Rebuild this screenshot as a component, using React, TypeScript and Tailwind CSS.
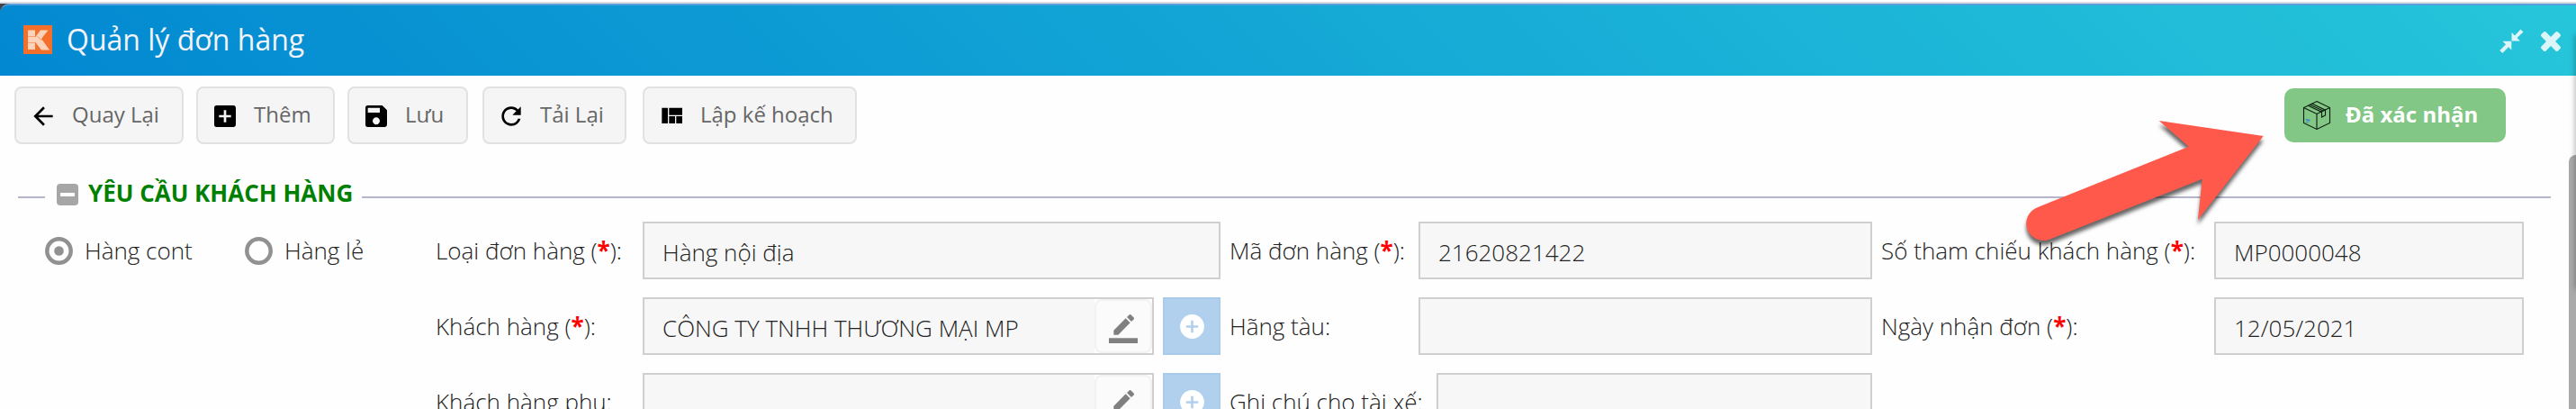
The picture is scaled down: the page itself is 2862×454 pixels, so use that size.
import type { ReactNode } from "react";
import { MdAddBox, MdArrowBack, MdRefresh, MdSave } from "react-icons/md";

function QuiltIcon() {
  return (
    <svg viewBox="0 0 24 24" className="size-8" fill="currentColor">
      <path d="M10 18h5v-6h-5v6zm-6 0h5V5H4v13zm12 0h5v-6h-5v6zM10 5v6h11V5H10z" />
    </svg>
  );
}

function LogoIcon() {
  return (
    <svg viewBox="0 0 32 32" className="-mt-0.5 size-8">
      <rect width="32" height="32" fill="#f4702a" />
      <path d="M5 5.500h8v8l6-8h8.500l-7.500 9.500 9 12.500h-9l-7-9v8.500h-8z" fill="#fbd3bb" />
      <path d="M5 12.500h8M5 19.500h8M15 12l6 5" stroke="#f7a273" strokeWidth="1" fill="none" />
    </svg>
  );
}

function BoxIcon() {
  return (
    <svg viewBox="0 0 32 34" className="h-[34px] w-8" fill="none" stroke="#0b1a0d" strokeWidth="1.1">
      <path d="M16 1.500 30.500 8.500V25.500L16 32.500 1.500 25.500V8.500z" />
      <path d="M1.500 8.500 16 15.500 30.500 8.500M16 15.500V32.500" />
      <path d="M6.500 6.300 21.500 13.400V19l4-2V11.200L10.500 4M8.500 5.200 23.500 12.300" />
      <path d="M3.500 21.500l4.500 1.800M4 24l2.500 1M5.500 21.500l3 1.200" stroke="#2f86d6" />
    </svg>
  );
}

function ToolButton({ icon, label, className }: { icon: ReactNode; label: string; className: string }) {
  return (
    <button
      className={`flex h-16 shrink-0 items-center gap-4 rounded-lg border-2 border-[#e2e2e2] bg-[#f5f5f5] pl-3.5 text-2xl leading-9 whitespace-nowrap text-[#666] ${className}`}
    >
      <span className="mt-px text-black">{icon}</span>
      <span className="-mt-[3px]">{label}</span>
    </button>
  );
}

function Label({ text, required, className }: { text: string; required?: boolean; className: string }) {
  return (
    <div className={`shrink-0 whitespace-nowrap ${className}`}>
      {text}
      {required && (
        <>
          {" ("}
          <span className="font-bold text-[#ff0000]">*</span>)
        </>
      )}
      :
    </div>
  );
}

function Field({ value, className, children }: { value?: string; className: string; children?: ReactNode }) {
  return (
    <div className={`flex h-16 shrink-0 items-center justify-between border-2 border-[#cfcfcf] bg-[#f7f7f7] ${className}`}>
      <span className="pt-1 pl-5 whitespace-nowrap">{value}</span>
      {children}
    </div>
  );
}

function EditButton() {
  return (
    <span className="block h-[60px] w-16 shrink-0 bg-white">
      <span className="flex h-full w-full items-center justify-center rounded-lg border-2 border-[#f2f2f2] bg-[#fbfbfb] pt-[5px]">
        <svg viewBox="0 0 24 24" className="size-8" fill="#808080">
          <path d="M17.75 7L14 3.250l-10 10V17h3.750l10-10zm2.960-2.960c.39-.39.39-1.020 0-1.410L18.370.29c-.39-.39-1.020-.39-1.410 0L15 2.250 18.750 6l1.960-1.960z" />
          <path d="M0 19.700h24v4.300H0z" />
        </svg>
      </span>
    </span>
  );
}

function AddButton() {
  return (
    <button className="ml-2.5 flex size-16 shrink-0 items-center justify-center border-2 border-[#a9cbea] bg-[#b1d0ee]">
      <svg viewBox="0 0 27 27" className="mt-px size-[27px]">
        <circle cx="13.500" cy="13.500" r="13.400" fill="#fff" />
        <path d="M13.500 6.800v13.400M6.800 13.500h13.400" stroke="#b1d0ee" strokeWidth="2.600" />
      </svg>
    </button>
  );
}

function Radio({ checked, label, className }: { checked?: boolean; label: string; className: string }) {
  return (
    <div className={`flex shrink-0 items-center whitespace-nowrap ${className}`}>
      <svg viewBox="0 0 31 31" className="mr-[13px] size-[31px]">
        <circle cx="15.500" cy="15.500" r="13.200" fill="none" stroke="#919191" strokeWidth="4.500" />
        {checked && <circle cx="15.500" cy="15.500" r="5.300" fill="#919191" />}
      </svg>
      {label}
    </div>
  );
}

function Row({ children }: { children: ReactNode }) {
  return <div className="flex h-16 shrink-0 items-center">{children}</div>;
}

export default function App() {
  return (
    <div className="relative flex h-[454px] w-[2862px] flex-col overflow-hidden bg-[#fefefe] font-['Open_Sans',sans-serif]">
      <div className="h-1 shrink-0 border-b-2 border-[#dcdde0] bg-white" />
      <div className="h-20 shrink-0 bg-[linear-gradient(90deg,#444_0,#444_10px,#fff_10px)]">
        <header className="flex h-full items-center rounded-tl-[10px] border-t-2 border-[#5a9fdc] bg-[linear-gradient(45deg,#0288d1,#26c6da)] pr-[17px] pl-[26px]">
          <LogoIcon />
          <h1 className="-mt-[3px] ml-4 text-[32px] leading-[44px] text-[#f3f3f8]">Quản lý đơn hàng</h1>
          <svg viewBox="0 0 27 27" className="ml-auto size-[27px]" fill="#dcf5f9">
            <path d="M13.500 4v9.500H23L19.500 10l7-6.500L23.500.5l-6.500 7zM13.300 13.700H3.500L7 17.200l-6.700 6.700 3 3 6.700-6.700 3.300 3.300z" />
          </svg>
          <svg viewBox="302 366 1188 1188" className="mt-0.5 ml-[19px] size-[22px]" fill="#dcf5f9">
            <path d="M1490 1322q0 40-28 68l-136 136q-28 28-68 28t-68-28l-294-294-294 294q-28 28-68 28t-68-28l-136-136q-28-28-28-68t28-68l294-294-294-294q-28-28-28-68t28-68l136-136q28-28 68-28t68 28l294 294 294-294q28-28 68-28t68 28l136 136q28 28 28 68t-28 68l-294 294 294 294q28 28 28 68z" />
          </svg>
        </header>
      </div>

      <div className="mt-3 flex h-16 shrink-0 items-center pr-[78px] pl-4">
        <ToolButton icon={<MdArrowBack className="size-8" />} label="Quay Lại" className="w-[188px]" />
        <ToolButton icon={<MdAddBox className="size-8" />} label="Thêm" className="ml-3.5 w-[154px]" />
        <ToolButton icon={<MdSave className="size-8" />} label="Lưu" className="ml-3.5 w-[134px]" />
        <ToolButton icon={<MdRefresh className="size-8" />} label="Tải Lại" className="ml-4 w-[160px]" />
        <ToolButton icon={<QuiltIcon />} label="Lập kế hoạch" className="ml-[18px] w-[238px]" />
        <button className="ml-auto flex h-[60px] w-[246px] items-center rounded-[10px] bg-[#82c785] pl-5 text-2xl leading-9 font-bold whitespace-nowrap text-white">
          <BoxIcon />
          <span className="-mt-[3px] ml-4">Đã xác nhận</span>
        </button>
      </div>

      <div className="mt-9 flex h-11 shrink-0 items-center pr-7 pl-5">
        <span className="mt-[2px] h-[2px] w-[30px] bg-[#b5b5c9]" />
        <span className="-mt-1 ml-[13px] flex size-6 items-center justify-center rounded bg-[#a6a6a6]">
          <span className="h-1 w-4 rounded-[1px] bg-white" />
        </span>
        <h2 className="-mt-2 ml-[11px] w-[304px] text-[26px] leading-9 font-bold whitespace-nowrap text-[#008000]">
          YÊU CẦU KHÁCH HÀNG
        </h2>
        <span className="mt-[2px] h-[2px] flex-1 bg-[#b5b5c9]" />
      </div>

      <main className="mt-1.5 flex flex-col gap-5 text-[26px] leading-9 font-light text-[#222]">
        <Row>
          <Radio checked label="Hàng cont" className="ml-[50px] w-[222px]" />
          <Radio label="Hàng lẻ" className="w-[212px]" />
          <Label text="Loại đơn hàng" required className="w-[230px]" />
          <Field value="Hàng nội địa" className="w-[642px]" />
          <Label text="Mã đơn hàng" required className="w-[220px] pl-2.5" />
          <Field value="21620821422" className="w-[504px]" />
          <Label text="Số tham chiếu khách hàng" required className="w-[380px] pl-2.5" />
          <Field value="MP0000048" className="w-[344px]" />
        </Row>
        <Row>
          <Label text="Khách hàng" required className="ml-[484px] w-[230px]" />
          <Field value="CÔNG TY TNHH THƯƠNG MẠI MP" className="w-[568px]">
            <EditButton />
          </Field>
          <AddButton />
          <Label text="Hãng tàu" className="w-[220px] pl-2.5" />
          <Field className="w-[504px]" />
          <Label text="Ngày nhận đơn" required className="w-[380px] pl-2.5" />
          <Field value="12/05/2021" className="w-[344px]" />
        </Row>
        <Row>
          <Label text="Khách hàng phụ" className="ml-[484px] w-[230px]" />
          <Field className="w-[568px]">
            <EditButton />
          </Field>
          <AddButton />
          <Label text="Ghi chú cho tài xế" className="w-[240px] pl-2.5" />
          <Field className="w-[484px]" />
        </Row>
      </main>

      <div className="absolute top-[172px] right-0 h-[300px] w-2 rounded-tl-lg bg-[#aaa]" />
      <div className="absolute top-10 -right-1 h-[280px] w-1 shadow-[0_0_6px_1px_rgba(0,0,0,0.3)]" />

      <svg
        viewBox="2240 120 290 170"
        className="absolute top-[120px] left-[2240px] h-[170px] w-[290px] overflow-visible drop-shadow-[0_5px_2px_rgba(0,0,0,0.6)]"
        fill="#ff594b"
      >
        <path d="M2263.500 230.200 2431.700 162.700 2398.700 134 2514.700 151 2442 244 2446.700 198.700 2277 265.800A18.700 18.700 0 0 1 2263.500 230.200z" />
      </svg>
    </div>
  );
}
